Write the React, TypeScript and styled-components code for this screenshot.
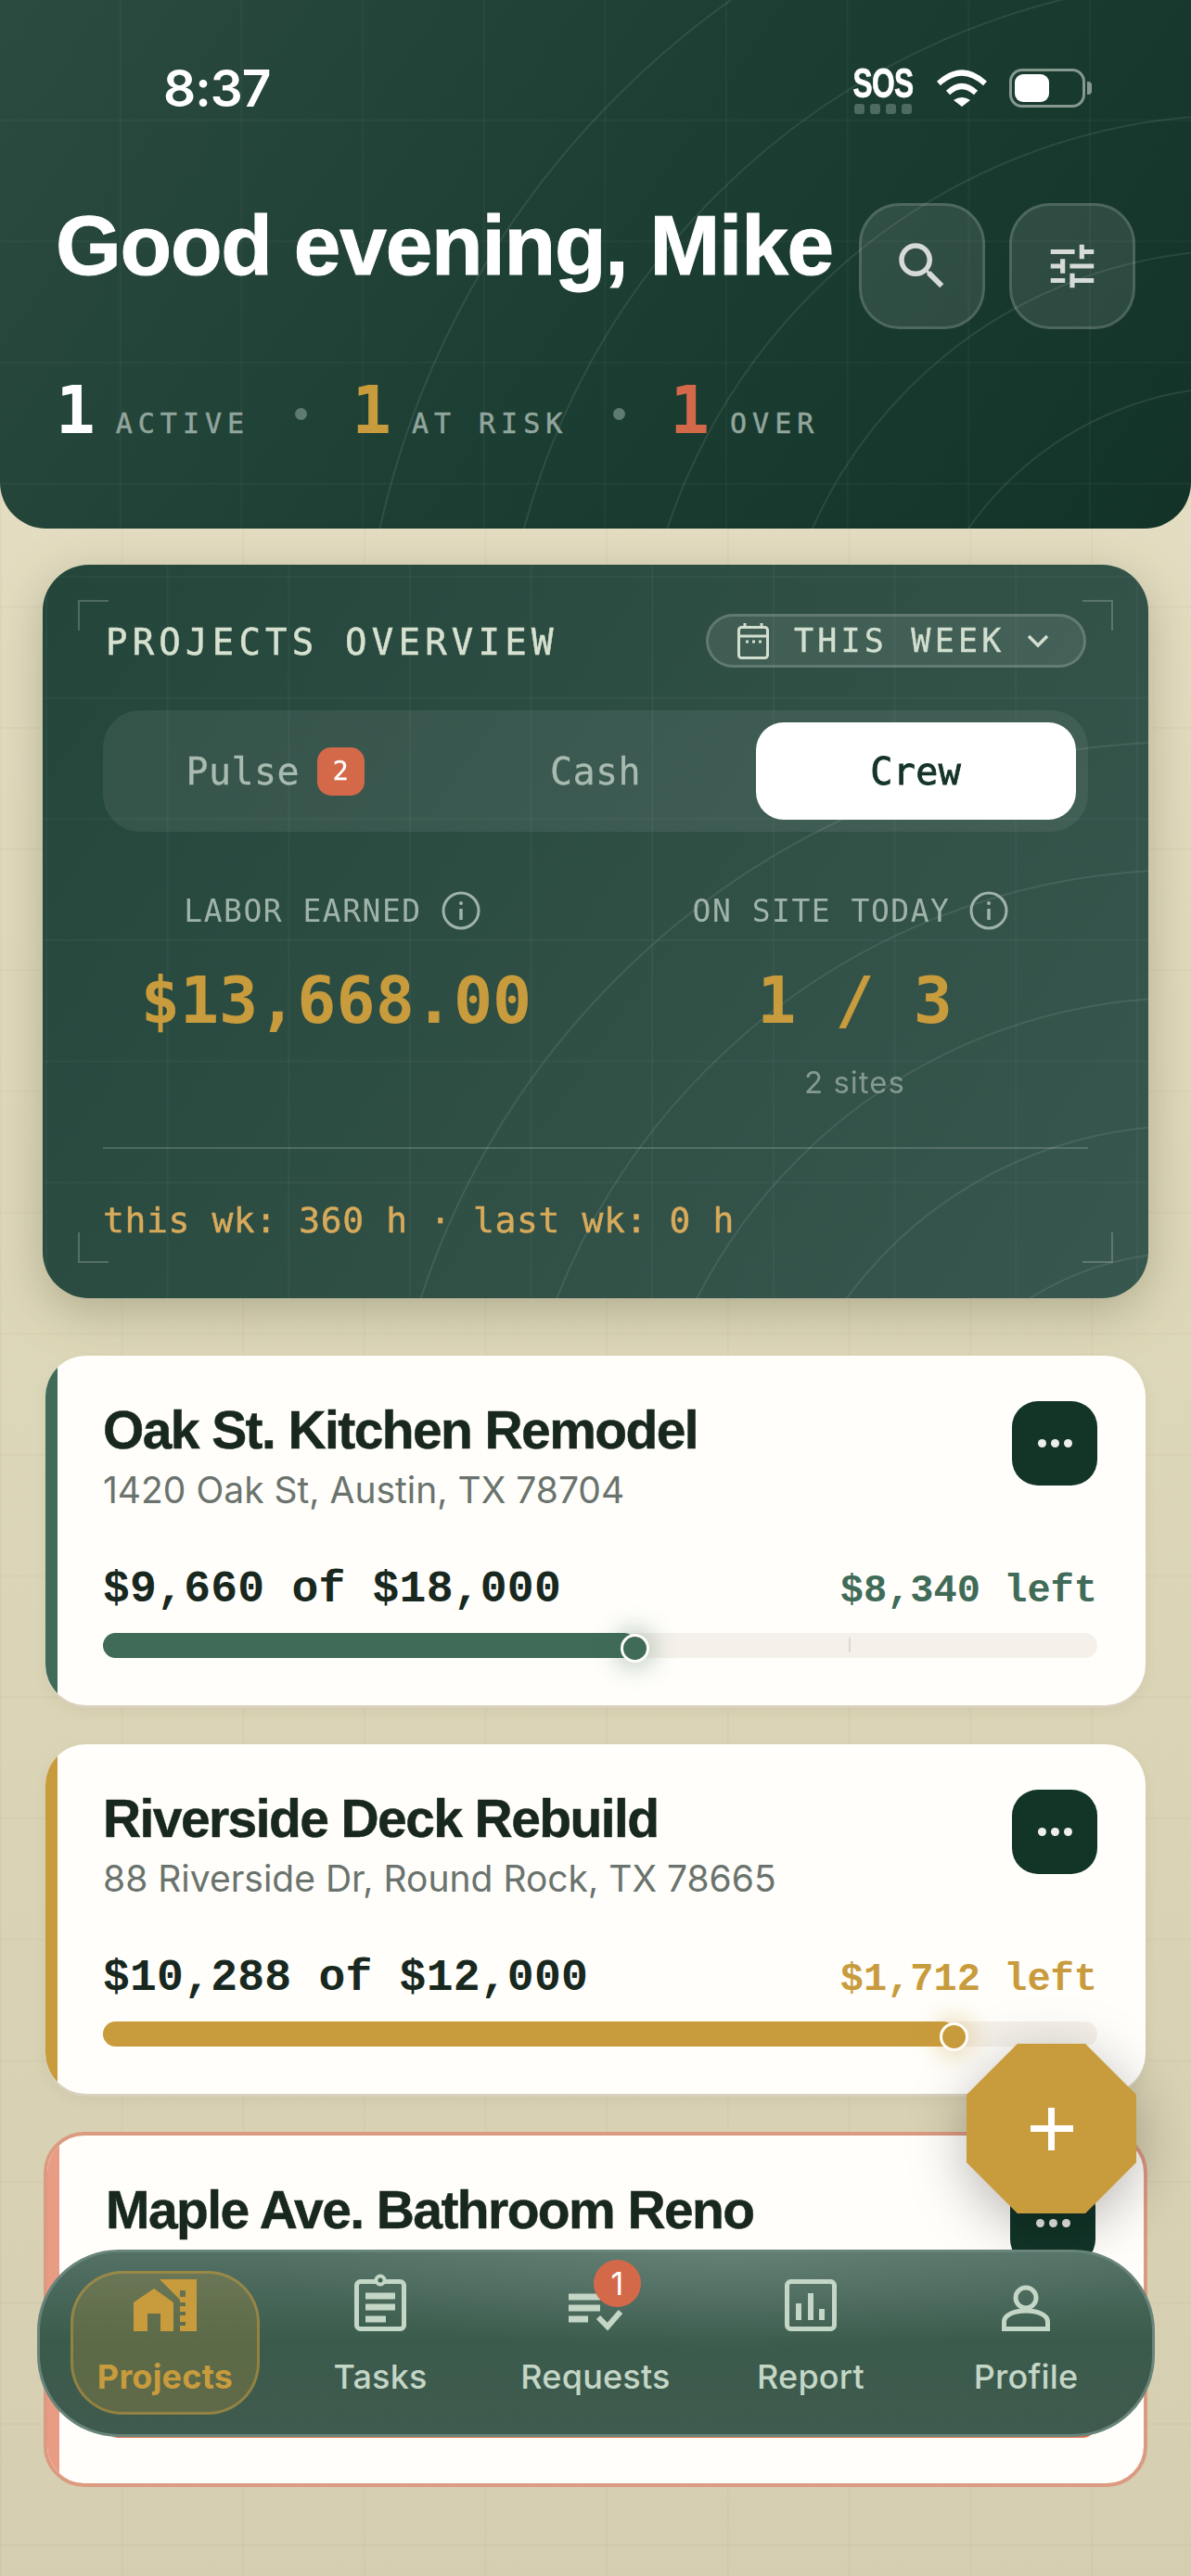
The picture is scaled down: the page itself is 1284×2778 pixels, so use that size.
import React from "react";
import styled, { createGlobalStyle } from "styled-components";
import { MdSearch, MdTune } from "react-icons/md";

const MONO = `"DejaVu Sans Mono", monospace`;
const PLEX = `"Liberation Mono", monospace`;
const SANS = `Inter, "Liberation Sans", sans-serif`;
const DISPLAY = `"Liberation Sans", Arial, sans-serif`;

const Global = createGlobalStyle`
  html, body { margin: 0; padding: 0; }
  * { box-sizing: border-box; }
`;

const gridLines = (c: string) => `
  linear-gradient(${c} 2px, transparent 2px),
  linear-gradient(90deg, ${c} 2px, transparent 2px)`;

const Page = styled.div`
  position: relative;
  width: 1284px;
  height: 2778px;
  overflow: hidden;
  font-family: ${SANS};
  background-image: ${gridLines("rgba(90,80,40,.035)")}, linear-gradient(180deg, #e7e0c6 0%, #ddd7b9 55%, #d5ceb0 100%);
  background-size: 130.67px 130.67px, 130.67px 130.67px, 100% 100%;
`;

const Header = styled.header`
  position: relative;
  height: 570px;
  overflow: hidden;
  border-radius: 0 0 50px 50px;
  padding-top: 70px;
  background-image: ${gridLines("rgba(255,255,255,.03)")}, linear-gradient(125deg, #2c4b40 0%, #1c3e33 50%, #133328 100%);
  background-size: 130.67px 130.67px, 130.67px 130.67px, 100% 100%;
  background-position: -2px -2px, -2px -2px, 0 0;
`;

const ArcSvg = styled.svg`
  position: absolute;
  inset: 0;
  width: 100%;
  height: 100%;
  pointer-events: none;
`;

const Layer = styled.div`
  position: relative;
`;

const StatusBar = styled.div`
  display: flex;
  align-items: center;
  justify-content: space-between;
  height: 50px;
  padding: 0 107px 0 176px;
`;

const Time = styled.span`
  font-size: 55px;
  font-weight: 600;
  color: #fff;
  letter-spacing: -1px;
  line-height: 50px;
`;

const StatusIcons = styled.div`
  display: flex;
  align-items: center;
  gap: 24px;
`;

const Sos = styled.div`
  display: flex;
  flex-direction: column;
  align-items: center;
  width: 68px;
  gap: 5px;
  margin-top: 6px;
`;

const SosText = styled.span`
  font-family: "Liberation Sans", sans-serif;
  font-weight: 700;
  font-size: 44px;
  line-height: 34px;
  letter-spacing: -1px;
  color: #fff;
  -webkit-text-stroke: 0.8px #fff;
  transform: scaleX(0.72);
`;

const SosDots = styled.div`
  display: flex;
  gap: 6px;
`;

const SosDot = styled.i`
  width: 11px;
  height: 11px;
  border-radius: 3px;
  background: #4d6b5f;
`;

const Battery = styled.div`
  position: relative;
  width: 82px;
  height: 42px;
  margin-right: 7px;
  padding: 3px;
  border: 3px solid #87998f;
  border-radius: 14px;
  &::after {
    content: "";
    position: absolute;
    right: -10px;
    top: 11px;
    width: 5px;
    height: 14px;
    border-radius: 0 4px 4px 0;
    background: #87998f;
  }
`;

const BatteryFill = styled.div`
  width: 37px;
  height: 100%;
  border-radius: 9px;
  background: #fff;
`;

const TitleRow = styled.div`
  display: flex;
  align-items: center;
  justify-content: space-between;
  margin-top: 99px;
  padding: 0 60px;
`;

const Title = styled.h1`
  margin: -44px 0 0;
  font-family: ${DISPLAY};
  font-size: 91px;
  line-height: 100px;
  font-weight: 700;
  letter-spacing: -1.2px;
  color: #fff;
  -webkit-text-stroke: 1px #fff;
  white-space: nowrap;
`;

const IconButtons = styled.div`
  display: flex;
  gap: 26px;
`;

const GlassButton = styled.button`
  display: flex;
  align-items: center;
  justify-content: center;
  width: 136px;
  height: 136px;
  padding: 0;
  border-radius: 44px;
  background: rgba(255, 255, 255, 0.1);
  border: 3px solid rgba(255, 255, 255, 0.15);
  color: #d6dbd7;
`;

const Stats = styled.div`
  display: flex;
  align-items: center;
  gap: 48.5px;
  margin-top: 48px;
  padding-left: 60px;
`;

const Stat = styled.div`
  display: flex;
  align-items: baseline;
  gap: 22px;
`;

const StatNum = styled.span<{ $c: string }>`
  font-family: ${MONO};
  font-weight: 700;
  font-size: 71px;
  line-height: 80px;
  color: ${(p) => p.$c};
`;

const StatLabel = styled.span`
  font-family: ${MONO};
  font-size: 30px;
  letter-spacing: 6px;
  color: #92a59d;
  -webkit-text-stroke: 0.5px #92a59d;
`;

const StatDot = styled.i`
  width: 13px;
  height: 13px;
  margin-top: 6px;
  border-radius: 50%;
  background: #5f7b70;
`;

const Overview = styled.section`
  position: relative;
  width: 1192px;
  height: 791px;
  margin: 39px 0 0 46px;
  padding: 53px 65px 0;
  overflow: hidden;
  border-radius: 50px;
  background-image: ${gridLines("rgba(255,255,255,.03)")}, linear-gradient(125deg, #23453a 0%, #2f4f45 50%, #38574e 100%);
  background-size: 130.67px 130.67px, 130.67px 130.67px, 100% 100%;
  background-position: 3px 12px, 3px 12px, 0 0;
`;

const OverviewShadow = styled.div`
  filter: drop-shadow(0 14px 26px rgba(60, 60, 30, 0.28));
`;

const Corner = styled.i<{ $v: "top" | "bottom"; $h: "left" | "right" }>`
  position: absolute;
  width: 33px;
  height: 33px;
  ${(p) => p.$v}: 38px;
  ${(p) => p.$h}: 38px;
  border-${(p) => p.$v}: 2px solid rgba(255, 255, 255, 0.2);
  border-${(p) => p.$h}: 2px solid rgba(255, 255, 255, 0.2);
`;

const OverviewHead = styled(Layer)`
  display: flex;
  align-items: center;
  justify-content: space-between;
  height: 58px;
  padding-right: 2px;
`;

const OverviewTitle = styled.h2`
  margin: 2px 0 0 3px;
  font-family: ${MONO};
  font-weight: 400;
  font-size: 39px;
  letter-spacing: 5.2px;
  color: #d7e1cf;
  -webkit-text-stroke: 0.5px #d7e1cf;
`;

const RangePill = styled.button`
  display: flex;
  align-items: center;
  width: 410px;
  height: 58px;
  padding: 0 0 0 31px;
  border-radius: 29px;
  border: 3px solid rgba(255, 255, 255, 0.17);
  background: rgba(255, 255, 255, 0.09);
  color: #d2dfcf;
  font-family: ${MONO};
  font-size: 35px;
  letter-spacing: 4.2px;
`;

const PillText = styled.span`
  margin: 0 24px 0 27px;
  white-space: nowrap;
  -webkit-text-stroke: 0.4px #d2dfcf;
`;

const Tabs = styled(Layer)`
  display: grid;
  grid-template-columns: repeat(3, 1fr);
  height: 131px;
  margin-top: 46px;
  padding: 13px;
  border-radius: 40px;
  background: rgba(255, 255, 255, 0.07);
`;

const Tab = styled.div<{ $on?: boolean }>`
  display: flex;
  align-items: center;
  justify-content: center;
  gap: 19px;
  border-radius: 30px;
  font-family: ${MONO};
  font-size: 40px;
  letter-spacing: 0.4px;
  background: ${(p) => (p.$on ? "#fff" : "transparent")};
  color: ${(p) => (p.$on ? "#143429" : "#a9bbb0")};
  -webkit-text-stroke: ${(p) => (p.$on ? "0.9px #143429" : "0.3px #a9bbb0")};
`;

const TabBadge = styled.span`
  display: flex;
  align-items: center;
  justify-content: center;
  width: 51px;
  height: 52px;
  border-radius: 15px;
  background: #d4694a;
  color: #fff;
  font-family: ${MONO};
  font-size: 28px;
  -webkit-text-stroke: 0.4px #fff;
`;

const Metrics = styled(Layer)`
  display: grid;
  grid-template-columns: 503px 503px;
  gap: 56px;
  height: 278px;
  margin-top: 64px;
  border-bottom: 2px solid rgba(255, 255, 255, 0.17);
`;

const Metric = styled.div`
  display: flex;
  flex-direction: column;
  align-items: center;
`;

const MetricLabel = styled.div`
  display: flex;
  align-items: center;
  gap: 21px;
  height: 42px;
  margin-left: -9px;
  font-family: ${MONO};
  font-size: 33px;
  letter-spacing: 1.5px;
  color: #a0b3a9;
  white-space: nowrap;
`;

const MetricValue = styled.div`
  margin-top: 31px;
  font-family: ${MONO};
  font-weight: 700;
  font-size: 70px;
  line-height: 90px;
  color: #c89b3c;
  white-space: nowrap;
`;

const MetricSub = styled.div`
  margin-top: 22px;
  font-size: 33px;
  line-height: 42px;
  letter-spacing: 1px;
  color: #84998f;
`;

const OverviewFoot = styled(Layer)`
  margin-top: 51px;
  font-family: ${MONO};
  font-size: 38px;
  line-height: 52px;
  letter-spacing: 0.6px;
  color: #d8aa5b;
  -webkit-text-stroke: 0.5px #d8aa5b;
`;

const Cards = styled.div`
  display: flex;
  flex-direction: column;
  gap: 42px;
  margin-top: 62px;
  padding: 0 49px;
`;

const Card = styled.article<{ $c: string; $over?: boolean }>`
  position: relative;
  overflow: hidden;
  padding: 49px 52px 51px 62px;
  border-radius: 44px;
  background: #fffefa;
  box-shadow: 0 3px 0 #d9d1bd, 0 6px 14px rgba(90, 80, 40, 0.08);
  &::before {
    content: "";
    position: absolute;
    left: 0;
    top: 0;
    bottom: 0;
    width: 13px;
    background: ${(p) => (p.$over ? "#e89c84" : p.$c)};
  }
  ${(p) =>
    p.$over &&
    `
    margin: -1px -2px 0;
    padding: 49px 52px 49px 63px;
    border: 4px solid #dc9a80;
    box-shadow: none;
  `}
`;

const CardTop = styled.div`
  display: flex;
  justify-content: space-between;
`;

const CardTitle = styled.h3`
  margin: -1px 0 1px;
  font-family: ${DISPLAY};
  font-size: 57px;
  line-height: 64px;
  font-weight: 700;
  letter-spacing: -1.6px;
  color: #18281f;
  -webkit-text-stroke: 0.5px #18281f;
`;

const Address = styled.p`
  margin: 9px 0 0;
  height: 47px;
  font-size: 39px;
  line-height: 47px;
  color: #6a736d;
`;

const MenuButton = styled.button`
  display: flex;
  align-items: center;
  justify-content: center;
  gap: 5px;
  flex: none;
  width: 92px;
  height: 91px;
  padding: 0;
  border: 0;
  border-radius: 28px;
  background: #123528;
`;

const MenuDot = styled.i`
  width: 9px;
  height: 9px;
  border-radius: 50%;
  background: #eeeeea;
`;

const AmountRow = styled.div`
  display: flex;
  align-items: baseline;
  justify-content: space-between;
  height: 56px;
  margin-top: 56px;
  white-space: pre;
`;

const Amount = styled.span`
  font-family: ${PLEX};
  font-weight: 700;
  font-size: 48px;
  line-height: 56px;
  letter-spacing: 0.25px;
  color: #18281f;
`;

const Left = styled.span<{ $c: string }>`
  font-family: ${PLEX};
  font-weight: 700;
  font-size: 42px;
  color: ${(p) => p.$c};
`;

const Track = styled.div`
  position: relative;
  height: 27px;
  margin-top: 19px;
  border-radius: 14px;
  background: #f5f1ea;
`;

const Tick = styled.i`
  position: absolute;
  left: 75%;
  top: 5px;
  width: 2px;
  height: 16px;
  background: #ddd9d1;
`;

const Fill = styled.div<{ $c: string; $knob: boolean }>`
  position: relative;
  height: 100%;
  border-radius: 14px;
  background: ${(p) => p.$c};
  ${(p) =>
    p.$knob &&
    `
  &::after {
    content: "";
    position: absolute;
    right: -14px;
    top: 1px;
    width: 25px;
    height: 25px;
    border-radius: 50%;
    background: ${p.$c};
    border: 3px solid #fffefa;
    box-shadow: 0 0 26px 6px ${p.$c}55;
  }`}
`;

const Fab = styled.div`
  position: absolute;
  left: 1042px;
  top: 2204px;
  filter: drop-shadow(0 14px 30px rgba(0, 0, 0, 0.28));
`;

const FabShape = styled.button`
  display: block;
  position: relative;
  width: 183px;
  height: 183px;
  padding: 0;
  border: 0;
  background: #c89b3c;
  clip-path: polygon(30% 0, 70% 0, 100% 30%, 100% 70%, 70% 100%, 30% 100%, 0 70%, 0 30%);
  &::before {
    content: "";
    position: absolute;
    left: 69px;
    top: 88px;
    width: 46px;
    height: 7px;
    background: #fff;
  }
  &::after {
    content: "";
    position: absolute;
    left: 88px;
    top: 69px;
    width: 7px;
    height: 46px;
    background: #fff;
  }
`;

const Nav = styled.nav`
  position: absolute;
  left: 40px;
  top: 2426px;
  width: 1205px;
  height: 202px;
  display: grid;
  grid-template-columns: repeat(5, 232px);
  justify-items: center;
  align-items: start;
  padding: 20px 19px 0;
  border-radius: 88px;
  border: 3px solid #69847a;
  background: radial-gradient(ellipse 500px 110px at 62% 0%, rgba(255,255,255,.1), transparent), linear-gradient(180deg, #537165 0%, #3a5b4c 50%, #3f5a4e 100%);
`;

const NavItem = styled.div<{ $on?: boolean }>`
  display: flex;
  flex-direction: column;
  align-items: center;
  width: 204px;
  height: 155px;
  border-radius: 56px;
  border: 3px solid ${(p) => (p.$on ? "rgba(200,155,60,.5)" : "transparent")};
  background: ${(p) => (p.$on ? "rgba(200,155,60,.24)" : "transparent")};
  color: ${(p) => (p.$on ? "#c89b3c" : "#c4d6c6")};
`;

const NavIcon = styled.div`
  position: relative;
  display: flex;
  align-items: flex-end;
  justify-content: center;
  height: 62px;
`;

const NavLabel = styled.span<{ $on?: boolean }>`
  margin-top: 27px;
  font-size: 36px;
  line-height: 44px;
  letter-spacing: 0.2px;
  font-weight: ${(p) => (p.$on ? 700 : 500)};
`;

const NavBadge = styled.span`
  position: absolute;
  left: 27px;
  top: -15px;
  display: flex;
  align-items: center;
  justify-content: center;
  width: 51px;
  height: 51px;
  border-radius: 50%;
  background: #d4694a;
  color: #fff;
  font-size: 34px;
  font-weight: 400;
`;

const Arcs = ({ cx, cy, radii, w, h }: { cx: number; cy: number; radii: number[]; w: number; h: number }) => (
  <ArcSvg viewBox={`0 0 ${w} ${h}`} aria-hidden>
    {radii.map((r) => (
      <circle key={r} cx={cx} cy={cy} r={r} fill="none" stroke="rgba(255,255,255,.09)" strokeWidth={2} />
    ))}
  </ArcSvg>
);

const Wifi = () => (
  <svg width="54" height="40" viewBox="0 0 54 40" fill="none">
    <path d="M2 15 Q27 -8 52 15" stroke="#fff" strokeWidth="6" />
    <path d="M12 25 Q27 11 42 25" stroke="#fff" strokeWidth="6" />
    <path d="M18 33 Q27 27 36 33 L27 40 Z" fill="#fff" />
  </svg>
);

const CalendarIcon = () => (
  <svg width="34" height="39" viewBox="0 0 34 39" fill="none" stroke="currentColor" strokeWidth="3">
    <rect x="1.5" y="4.5" width="31" height="33" rx="3" />
    <path d="M1.5 14h31M8 0v5M26 0v5" />
    <path d="M9 20h3M16 20h3M23 20h3" />
  </svg>
);

const Chevron = () => (
  <svg width="24" height="16" viewBox="0 0 24 16" fill="none" stroke="currentColor" strokeWidth="3.5">
    <path d="M2 3l10 10L22 3" />
  </svg>
);

const Info = () => (
  <svg width="42" height="42" viewBox="0 0 42 42" fill="none" stroke="#a0b3a9" strokeWidth="3">
    <circle cx="21" cy="21" r="19" />
    <path d="M21 19v12" strokeWidth="3.5" />
    <circle cx="21" cy="13" r="2" fill="#a0b3a9" stroke="none" />
  </svg>
);

const ProjectsIcon = () => (
  <svg width="68" height="56" viewBox="0 0 68 56" fill="currentColor">
    <path d="M0 25 L22 10 L43 25 V56 H29 V37 H15 V56 H0 Z" />
    <path fillRule="evenodd" d="M28 0 H68 V56 H50 V50 H56 V46 H50 V39 H56 V35 H50 V29 H56 V25 H50 V22 Z M50 12 V19 H56 V12 Z" />
  </svg>
);

const TasksIcon = () => (
  <svg width="56" height="62" viewBox="0 0 56 62" fill="none" stroke="currentColor">
    <rect x="2.5" y="8.5" width="51" height="51" rx="4" strokeWidth="5" />
    <circle cx="28" cy="7" r="4.5" strokeWidth="4" fill="#3f6054" />
    <path d="M12 24h32M12 36h32M12 49h22" strokeWidth="7" />
  </svg>
);

const RequestsIcon = () => (
  <svg width="58" height="41" viewBox="0 0 58 41" fill="none" stroke="currentColor" strokeWidth="7">
    <path d="M0 4h34M0 16h34M0 28h21" />
    <path d="M32 26l10 10L56 20" strokeWidth="6" />
  </svg>
);

const ReportIcon = () => (
  <svg width="56" height="56" viewBox="0 0 56 56" fill="none" stroke="currentColor">
    <rect x="2.5" y="2.5" width="51" height="51" rx="4" strokeWidth="5" />
    <path d="M15 44V26M28 44V15M40 44V32" strokeWidth="6" />
  </svg>
);

const ProfileIcon = () => (
  <svg width="52" height="50" viewBox="0 0 52 50" fill="none" stroke="currentColor" strokeWidth="5">
    <circle cx="26" cy="14" r="11" />
    <path d="M2.5 47.5V40C2.5 32 14 28 26 28s23.5 4 23.5 12v7.5z" />
  </svg>
);

type P = { title: string; addr: string; spent: string; left: string; pct: number; c: string; tick?: boolean; over?: boolean };

const projects: P[] = [
  { title: "Oak St. Kitchen Remodel", addr: "1420 Oak St, Austin, TX 78704", spent: "$9,660 of $18,000", left: "$8,340 left", pct: 53.67, c: "#3f6b58", tick: true },
  { title: "Riverside Deck Rebuild", addr: "88 Riverside Dr, Round Rock, TX 78665", spent: "$10,288 of $12,000", left: "$1,712 left", pct: 85.73, c: "#c89b3c" },
  { title: "Maple Ave. Bathroom Reno", addr: "", spent: " ", left: "", pct: 100, c: "#e0714f", over: true },
];

const navItems = [
  { label: "Projects", icon: <ProjectsIcon />, on: true },
  { label: "Tasks", icon: <TasksIcon /> },
  { label: "Requests", icon: <RequestsIcon />, badge: "1" },
  { label: "Report", icon: <ReportIcon /> },
  { label: "Profile", icon: <ProfileIcon /> },
];

export default function App() {
  return (
    <Page>
      <Global />
      <Header>
        <Arcs w={1284} h={570} cx={1338} cy={776} radii={[359, 506, 652, 800, 951]} />
        <Layer>
          <StatusBar>
            <Time>8:37</Time>
            <StatusIcons>
              <Sos>
                <SosText>SOS</SosText>
                <SosDots>
                  <SosDot /><SosDot /><SosDot /><SosDot />
                </SosDots>
              </Sos>
              <Wifi />
              <Battery><BatteryFill /></Battery>
            </StatusIcons>
          </StatusBar>
          <TitleRow>
            <Title>Good evening, Mike</Title>
            <IconButtons>
              <GlassButton><MdSearch size={66} /></GlassButton>
              <GlassButton><MdTune size={62} /></GlassButton>
            </IconButtons>
          </TitleRow>
          <Stats>
            <Stat><StatNum $c="#fff">1</StatNum><StatLabel>ACTIVE</StatLabel></Stat>
            <StatDot />
            <Stat><StatNum $c="#c89b3c">1</StatNum><StatLabel>AT RISK</StatLabel></Stat>
            <StatDot />
            <Stat><StatNum $c="#d4694a">1</StatNum><StatLabel>OVER</StatLabel></Stat>
          </Stats>
        </Layer>
      </Header>

      <OverviewShadow>
        <Overview>
          <Arcs w={1192} h={791} cx={1234} cy={1060} radii={[318, 455, 593, 731, 869]} />
          <Corner $v="top" $h="left" />
          <Corner $v="top" $h="right" />
          <Corner $v="bottom" $h="left" />
          <Corner $v="bottom" $h="right" />
          <OverviewHead>
            <OverviewTitle>PROJECTS OVERVIEW</OverviewTitle>
            <RangePill>
              <CalendarIcon />
              <PillText>THIS WEEK</PillText>
              <Chevron />
            </RangePill>
          </OverviewHead>
          <Tabs>
            <Tab>Pulse<TabBadge>2</TabBadge></Tab>
            <Tab>Cash</Tab>
            <Tab $on>Crew</Tab>
          </Tabs>
          <Metrics>
            <Metric>
              <MetricLabel>LABOR EARNED<Info /></MetricLabel>
              <MetricValue>$13,668.00</MetricValue>
            </Metric>
            <Metric>
              <MetricLabel>ON SITE TODAY<Info /></MetricLabel>
              <MetricValue>1 / 3</MetricValue>
              <MetricSub>2 sites</MetricSub>
            </Metric>
          </Metrics>
          <OverviewFoot>this wk: 360 h · last wk: 0 h</OverviewFoot>
        </Overview>
      </OverviewShadow>

      <Cards>
        {projects.map((p) => (
          <Card key={p.title} $c={p.c} $over={p.over}>
            <CardTop>
              <div>
                <CardTitle>{p.title}</CardTitle>
                <Address>{p.addr}</Address>
              </div>
              <MenuButton><MenuDot /><MenuDot /><MenuDot /></MenuButton>
            </CardTop>
            <AmountRow>
              <Amount>{p.spent}</Amount>
              <Left $c={p.c}>{p.left}</Left>
            </AmountRow>
            <Track>
              {p.tick && <Tick />}
              <Fill $c={p.c} $knob={p.pct < 100} style={{ width: `${p.pct}%` }} />
            </Track>
          </Card>
        ))}
      </Cards>

      <Fab><FabShape aria-label="Add" /></Fab>

      <Nav>
        {navItems.map((n) => (
          <NavItem key={n.label} $on={n.on}>
            <NavIcon>
              {n.icon}
              {n.badge && <NavBadge>{n.badge}</NavBadge>}
            </NavIcon>
            <NavLabel $on={n.on}>{n.label}</NavLabel>
          </NavItem>
        ))}
      </Nav>
    </Page>
  );
}
